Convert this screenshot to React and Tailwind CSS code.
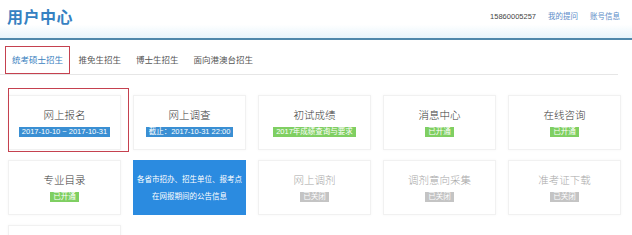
import React from "react";

const font = { fontFamily: '"Liberation Sans", "Noto Sans CJK SC", sans-serif' };

function Badge({ color, children }) {
  const cls =
    color === "blue"
      ? "bg-[#3a8fd3] text-white"
      : color === "green"
      ? "bg-[#7fcf62] text-white"
      : "bg-[#c4c4c4] text-white";
  return (
    <span className={`${cls} inline-block px-[3px] h-[10px] leading-[10px] text-[7.5px] whitespace-nowrap`}>
      {children}
    </span>
  );
}

function Card({ title, badge, color, muted, mark }) {
  return (
    <div className="relative h-[55px] bg-white border border-[#f1f1f1] shadow-[0_0_3px_rgba(0,0,0,0.04)] flex flex-col items-center justify-center gap-[5px]">
      <div className={`text-[10.5px] leading-[13px] font-light ${muted ? "text-[#a8a8a8]" : "text-[#383838]"}`}>{title}</div>
      <Badge color={color}>{badge}</Badge>
      {mark && (
        <div className="absolute top-[-8px] left-[-1px] right-[-9px] bottom-[-3px] border-[1.5px] border-[#c5414f] pointer-events-none" />
      )}
    </div>
  );
}

export default function App() {
  return (
    <div className="w-[632px] h-[235px] bg-white overflow-hidden" style={font}>
      <div className="h-[40px] bg-gradient-to-b from-white from-65% to-[#e6f4fb] border-b-2 border-[#4f88ab] flex items-center justify-between pl-[7px] pr-[12px]">
        <div className="text-[16px] font-bold text-[#3581c2] tracking-[0.5px] mt-[-2px]">用户中心</div>
        <div className="flex items-center gap-[12px] text-[7.5px] mt-[-4px]">
          <span className="text-[#444]">15860005257</span>
          <span className="text-[#5b8cc8]">我的提问</span>
          <span className="text-[#5b8cc8]">账号信息</span>
        </div>
      </div>
      <div className="h-[35px] flex items-end border-b border-[#e6e6e6] mr-[14px] pl-[5px]">
        <div className="relative h-[28px] px-[7px] flex items-center text-[8.5px] text-[#3a82c0]">
          统考硕士招生
          <div className="absolute inset-0 border-[1.5px] border-[#c5414f] pointer-events-none" />
        </div>
        <div className="h-[28px] px-[7.5px] ml-[1px] flex items-center text-[8.5px] text-[#555]">推免生招生</div>
        <div className="h-[28px] px-[7.5px] flex items-center text-[8.5px] text-[#555]">博士生招生</div>
        <div className="h-[28px] px-[7.5px] flex items-center text-[8.5px] text-[#555]">面向港澳台招生</div>
      </div>
      <div className="grid grid-cols-[repeat(5,113px)] gap-x-[12px] gap-y-[10px] pl-[8px] pt-[20px]">
        <Card title="网上报名" badge="2017-10-10 ~ 2017-10-31" color="blue" mark />
        <Card title="网上调查" badge="截止：2017-10-31 22:00" color="blue" />
        <Card title="初试成绩" badge="2017年成绩查询与要求" color="green" />
        <Card title="消息中心" badge="已开通" color="green" />
        <Card title="在线咨询" badge="已开通" color="green" />

        <Card title="专业目录" badge="已开通" color="green" />
        <div className="h-[55px] bg-[#2b8be0] flex flex-col items-center justify-center text-white text-[7.5px] leading-[17px]">
          <div>各省市招办、招生单位、报考点</div>
          <div>在网报期间的公告信息</div>
        </div>
        <Card title="网上调剂" badge="已关闭" color="gray" muted />
        <Card title="调剂意向采集" badge="已关闭" color="gray" muted />
        <Card title="准考证下载" badge="已关闭" color="gray" muted />

        <Card title="" badge="" color="gray" />
      </div>
    </div>
  );
}
